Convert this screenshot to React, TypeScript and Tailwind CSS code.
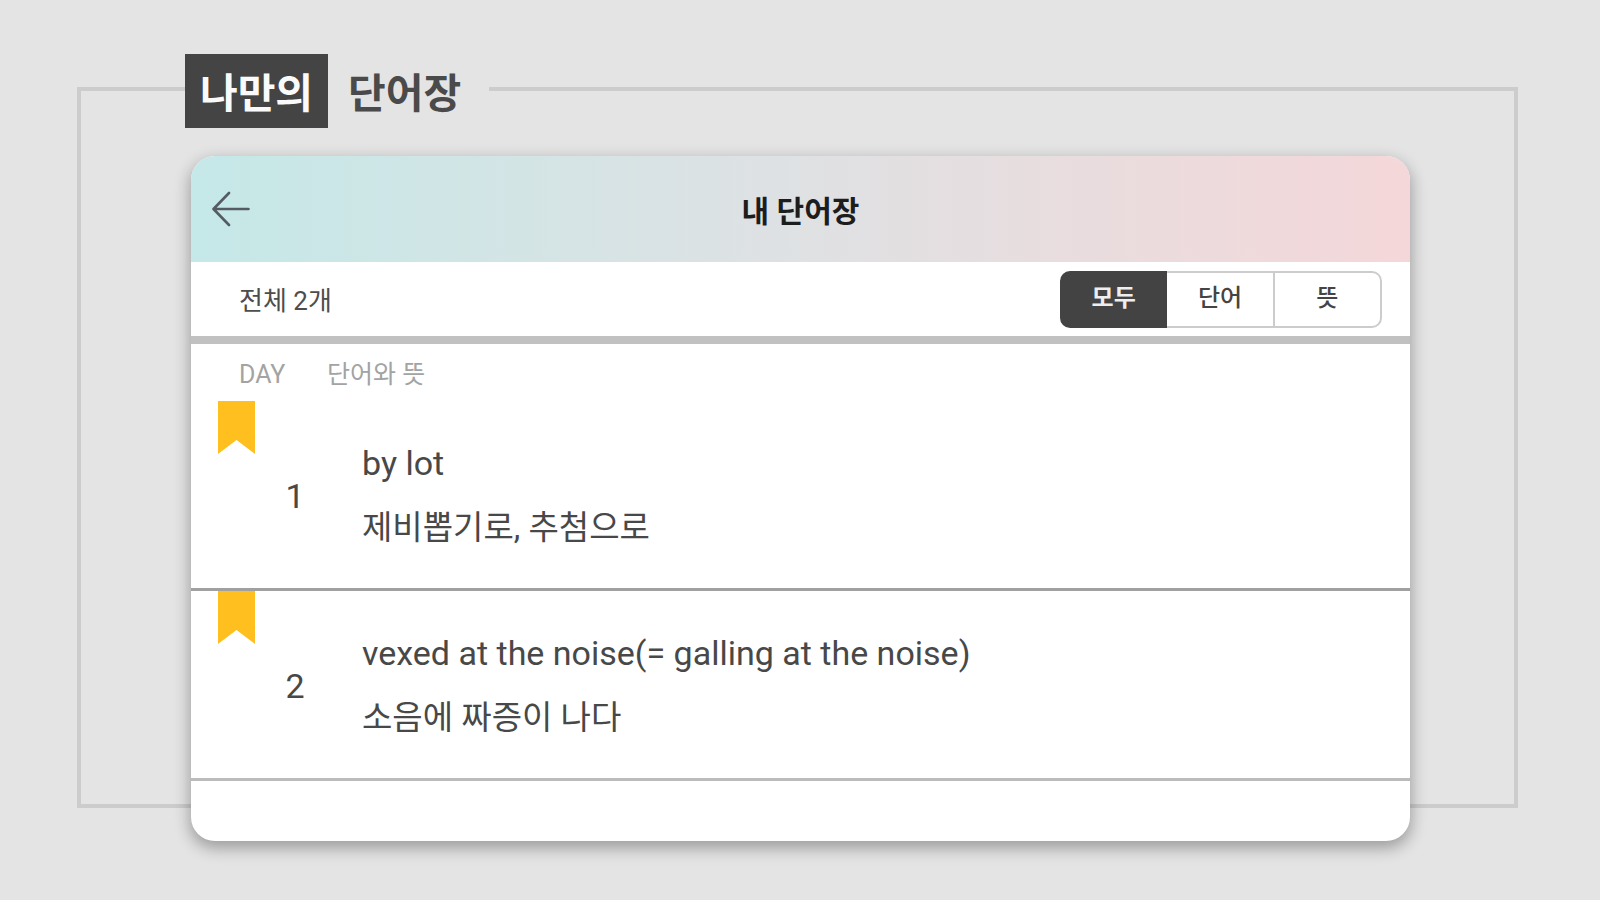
import { useState } from "react";

type Entry = { day: number; word: string; meaning: string };

const entries: Entry[] = [
  { day: 1, word: "by lot", meaning: "제비뽑기로, 추첨으로" },
  { day: 2, word: "vexed at the noise(= galling at the noise)", meaning: "소음에 짜증이 나다" },
];

const filters = ["모두", "단어", "뜻"];

function Bookmark() {
  return (
    <svg className="absolute top-0 left-[27px] h-[53px] w-[37px]" viewBox="0 0 37 53" aria-hidden="true">
      <path d="M0 0H37V53L18.5 39L0 53Z" fill="#ffbf1f" />
    </svg>
  );
}

function FilterTabs() {
  const [active, setActive] = useState("모두");
  return (
    <div className="grid h-[57px] w-[322px] grid-cols-3">
      {filters.map((name) => (
        <button
          key={name}
          type="button"
          aria-pressed={active === name}
          onClick={() => setActive(name)}
          className={
            active === name
              ? "border-y-2 border-r-2 border-[#434343] bg-[#434343] pb-0.5 text-2xl font-bold text-[#eeeeee] first:rounded-l-[10px] first:border-l-2 last:rounded-r-[10px]"
              : "border-y-2 border-r-2 border-[#cccccc] bg-white pb-0.5 text-2xl font-medium text-[#444444] first:rounded-l-[10px] first:border-l-2 last:rounded-r-[10px]"
          }
        >
          {name}
        </button>
      ))}
    </div>
  );
}

export default function App() {
  return (
    <main className="min-h-screen bg-[#e4e4e4] pt-[87px] pr-[82px] pb-[91px] pl-[77px] font-[Roboto,'Noto_Sans_CJK_KR',sans-serif]">
      <section className="border-4 border-[#cccccc] pr-[104px] pl-[104px]">
        <h1 className="-mt-[37px] flex h-[74px] w-[304px] items-stretch bg-[#e4e4e4] text-[41px] leading-[80px] font-bold">
          <span className="w-[143px] bg-[#444444] text-center text-[#fafafa]">나만의</span>
          <span className="pl-5 text-[#4a4a4a]">단어장</span>
        </h1>

        <div className="mt-7 -mb-[37px] ml-1.5 overflow-hidden rounded-[24px] bg-white pb-[60px] shadow-[0_6px_16px_1px_rgba(0,0,0,0.32)]">
          <header className="grid h-[106px] grid-cols-[80px_1fr_80px] items-center bg-linear-to-r from-[#c5e8e8] via-[#dfe1e3] to-[#f4d7d9]">
            <button type="button" aria-label="뒤로" className="pl-[21px]">
              <svg className="h-9 w-[38px]" viewBox="0 0 38 36" fill="none" stroke="#555b62" strokeWidth="2.6" strokeLinecap="round" strokeLinejoin="round" aria-hidden="true">
                <path d="M36.500 18H2M17 2L1.500 18L17 34" />
              </svg>
            </button>
            <h2 className="pt-1 text-center text-[30px] font-bold text-[#1d1d1d]">내 단어장</h2>
          </header>

          <div className="flex h-[82px] items-center justify-between border-b-8 border-[#c1c1c1] pr-7 pl-12">
            <p className="pt-1 text-[26px] text-[#4d4d4d]">전체 2개</p>
            <FilterTabs />
          </div>

          <table className="w-full table-fixed border-separate border-spacing-0 text-left">
            <thead>
              <tr className="h-[57px] text-[25px] leading-[53px] text-[#a3a3a3]">
                <th className="w-[136px] p-0 pt-1 pl-12 font-normal">DAY</th>
                <th className="p-0 pt-1 font-normal">단어와 뜻</th>
              </tr>
            </thead>
            <tbody>
              {entries.map((entry) => (
                <tr key={entry.day} className="h-[190px] text-[#484848] [&>td]:border-b-3 [&>td]:border-[#a0a0a0] last:[&>td]:border-[#bbbbbb]">
                  <td className="relative p-0 pt-1 pl-[72px] text-center text-[34px]">
                    <Bookmark />
                    {entry.day}
                  </td>
                  <td className="p-0 pt-0.5 pl-[35px]">
                    <p className="text-[34px] leading-[64px]">{entry.word}</p>
                    <p className="text-[33px] leading-[66px]">{entry.meaning}</p>
                  </td>
                </tr>
              ))}
            </tbody>
          </table>
        </div>
      </section>
    </main>
  );
}
